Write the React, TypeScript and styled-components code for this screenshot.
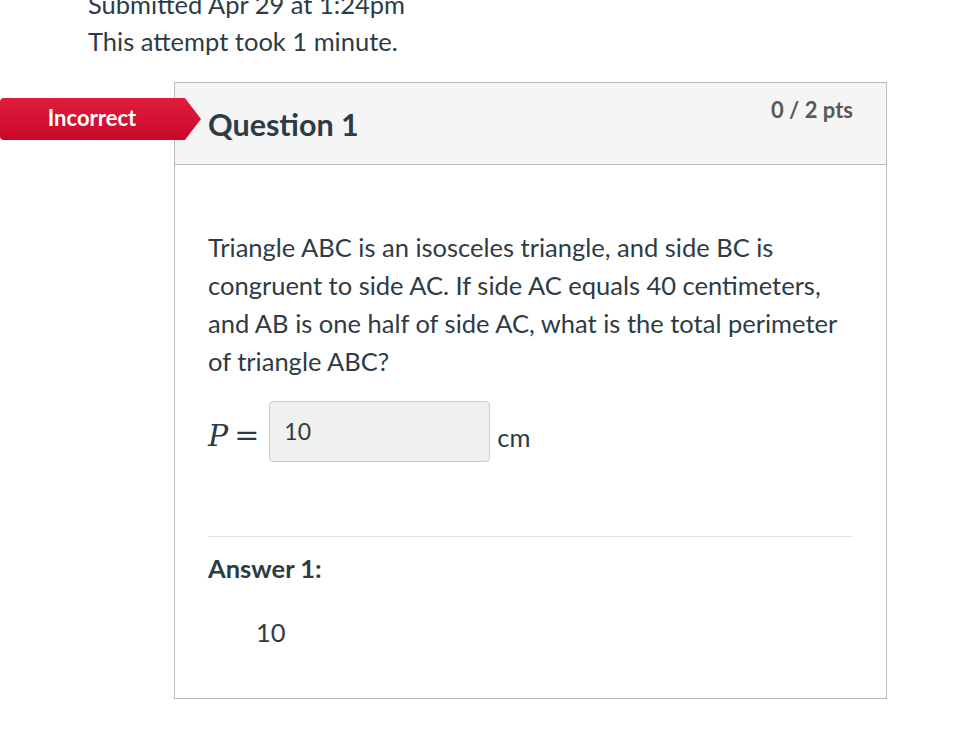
import React from "react";
import styled, { createGlobalStyle } from "styled-components";

const GlobalStyle = createGlobalStyle`
  html, body {
    margin: 0;
    padding: 0;
    background: #ffffff;
    font-family: Lato, "Open Sans", "Liberation Sans", sans-serif;
    color: #2d3b45;
    overflow: hidden;
  }
`;

const Page = styled.div`
  width: 963px;
  height: 746px;
  overflow: hidden;
`;

const Info = styled.div`
  margin-top: -14px;
  padding-left: 88px;
  font-size: 25.5px;
  line-height: 37px;
`;

const QuestionWrap = styled.div`
  position: relative;
  margin: 22px 0 0 174px;
  width: 713px;
  box-sizing: border-box;
  border: 1px solid #b9b9b9;
`;

const Badge = styled.div`
  position: absolute;
  left: -175px;
  top: 15px;
  width: 201px;
  height: 42px;
  box-sizing: border-box;
  padding: 0 17px 3px 0;
  display: flex;
  align-items: center;
  justify-content: center;
  color: #fff;
  font-size: 22px;
  font-weight: 700;
  background: linear-gradient(to bottom, #e11d3c 0%, #c8072a 100%);
  border-radius: 4px 0 0 4px;
  clip-path: polygon(0 0, 92% 0, 100% 50%, 92% 100%, 0 100%);
`;

const Header = styled.div`
  height: 81px;
  background: #f5f5f5;
  border-bottom: 1px solid #b9b9b9;
  padding: 0 33px;
  display: flex;
  justify-content: space-between;
  align-items: flex-start;
`;

const Title = styled.h2`
  margin: 23px 0 0;
  font-size: 30.5px;
  font-weight: 700;
  line-height: 36px;
`;

const Points = styled.div`
  margin-top: 14px;
  font-size: 22px;
  font-weight: 700;
  line-height: 26px;
  color: #595959;
`;

const Body = styled.div`
  padding: 0 33px 51px;
`;

const Text = styled.p`
  margin: 63px 0 0;
  font-size: 25.5px;
  line-height: 38px;
`;

const MathRow = styled.div`
  margin-top: 21px;
  display: flex;
  align-items: center;
`;

const Var = styled.span`
  font-family: "DejaVu Serif", "Liberation Serif", serif;
  font-style: italic;
  font-size: 30px;
  margin-top: 8px;
`;

const Eq = styled.span`
  font-family: "DejaVu Serif", "Liberation Serif", serif;
  font-size: 30px;
  margin: 6px 10px 0 6px;
`;

const AnswerBox = styled.div`
  width: 221px;
  height: 61px;
  box-sizing: border-box;
  background: #f0f0f0;
  border: 1px solid #c7cdd1;
  border-radius: 4px;
  padding: 0 14px 2px;
  display: flex;
  align-items: center;
  font-size: 23px;
`;

const Unit = styled.span`
  margin: 10px 0 0 7px;
  font-size: 25.5px;
`;

const Divider = styled.hr`
  margin: 74px 0 0;
  border: none;
  border-top: 1px solid #e2e2e2;
`;

const AnswerLabel = styled.div`
  margin-top: 16px;
  font-size: 25.5px;
  font-weight: 700;
  line-height: 30px;
`;

const AnswerValue = styled.div`
  margin: 34px 0 0 48px;
  font-size: 25.5px;
  line-height: 30px;
`;

export default function App() {
  return (
    <Page>
      <GlobalStyle />
      <Info>
        <div>Submitted Apr 29 at 1:24pm</div>
        <div>This attempt took 1 minute.</div>
      </Info>
      <QuestionWrap>
        <Badge>Incorrect</Badge>
        <Header>
          <Title>Question 1</Title>
          <Points>0 / 2 pts</Points>
        </Header>
        <Body>
          <Text>
            Triangle ABC is an isosceles triangle, and side BC is congruent to
            side AC. If side AC equals 40 centimeters, and AB is one half of
            side AC, what is the total perimeter of triangle ABC?
          </Text>
          <MathRow>
            <Var>P</Var>
            <Eq>=</Eq>
            <AnswerBox>10</AnswerBox>
            <Unit>cm</Unit>
          </MathRow>
          <Divider />
          <AnswerLabel>Answer 1:</AnswerLabel>
          <AnswerValue>10</AnswerValue>
        </Body>
      </QuestionWrap>
    </Page>
  );
}
